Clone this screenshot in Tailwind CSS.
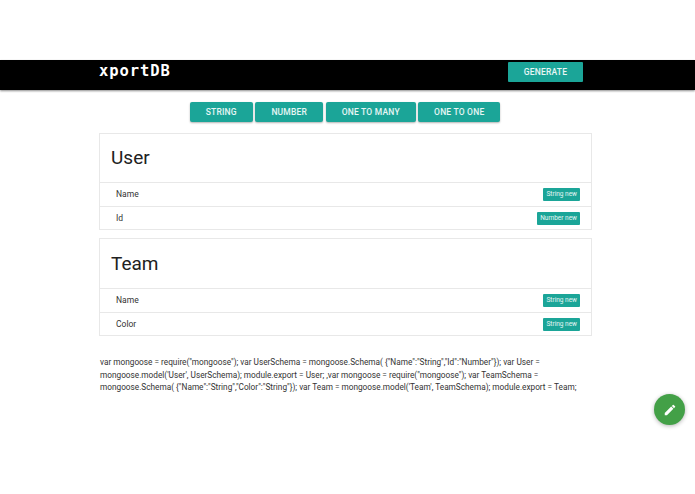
<!DOCTYPE html>
<html lang="en">
  <head>
    <meta charset="utf-8" />
    <title>xportDB</title>
    <script src="https://cdn.jsdelivr.net/npm/@tailwindcss/browser@4"></script>
  </head>
  <body class="relative bg-white h-[494px] w-[695px] overflow-hidden font-['Roboto',sans-serif] text-[#212121]">
    <div class="h-[60px]"></div>

    <!-- Nav -->
    <nav class="h-[30px] bg-black shadow-[0_1px_2px_rgba(0,0,0,0.45)] pl-[99px] pr-[112px] flex justify-between items-start">
      <span class="mt-[1px] font-['DejaVu_Sans_Mono',monospace] font-bold text-white text-[15.5px] tracking-[0.9px] leading-5">xportDB</span>
      <button class="mt-[2px] w-[75px] h-[20px] pt-[1px] bg-[#1ba598] text-white/90 text-[8.5px] font-medium tracking-[0.2px] rounded-[1px]">GENERATE</button>
    </nav>

    <!-- Type buttons -->
    <div class="flex justify-center gap-[2.5px] mt-3 pr-[5px]">
      <button class="w-[63px] h-[20px] bg-[#1ba598] text-white/90 text-[8.5px] font-medium tracking-[0.2px] rounded-[2px] shadow-[0_1px_2px_rgba(0,0,0,0.3)]">STRING</button>
      <button class="w-[68px] h-[20px] bg-[#1ba598] text-white/90 text-[8.5px] font-medium tracking-[0.2px] rounded-[2px] shadow-[0_1px_2px_rgba(0,0,0,0.3)]">NUMBER</button>
      <button class="w-[90px] h-[20px] bg-[#1ba598] text-white/90 text-[8.5px] font-medium tracking-[0.2px] rounded-[2px] shadow-[0_1px_2px_rgba(0,0,0,0.3)]">ONE TO MANY</button>
      <button class="w-[82px] h-[20px] bg-[#1ba598] text-white/90 text-[8.5px] font-medium tracking-[0.2px] rounded-[2px] shadow-[0_1px_2px_rgba(0,0,0,0.3)]">ONE TO ONE</button>
    </div>

    <main class="ml-[99px] w-[493px] mt-[11px]">
      <!-- User -->
      <section class="border border-[#e8e8e8] text-[8.5px] text-[#333]">
        <h2 class="h-[48px] pl-[11px] flex items-center text-[19px] text-[#212121]">User</h2>
        <div class="h-[24px] border-t border-[#e8e8e8] pl-[16px] pr-[11px] flex items-center justify-between">
          <span>Name</span>
          <span class="h-[13px] px-[3px] bg-[#1ba598] text-white/90 text-[6.5px] leading-[13px] rounded-[1px]">String new</span>
        </div>
        <div class="h-[23px] border-t border-[#e8e8e8] pl-[16px] pr-[11px] flex items-center justify-between">
          <span>Id</span>
          <span class="h-[13px] px-[3px] bg-[#1ba598] text-white/90 text-[6.5px] leading-[13px] rounded-[1px]">Number new</span>
        </div>
      </section>

      <!-- Team -->
      <section class="border border-[#e8e8e8] text-[8.5px] text-[#333] mt-[8px]">
        <h2 class="h-[49px] pl-[11px] pt-[2px] flex items-center text-[19px] text-[#212121]">Team</h2>
        <div class="h-[24px] border-t border-[#e8e8e8] pl-[16px] pr-[11px] flex items-center justify-between">
          <span>Name</span>
          <span class="h-[13px] px-[3px] bg-[#1ba598] text-white/90 text-[6.5px] leading-[13px] rounded-[1px]">String new</span>
        </div>
        <div class="h-[23px] border-t border-[#e8e8e8] pl-[16px] pr-[11px] flex items-center justify-between">
          <span>Color</span>
          <span class="h-[13px] px-[3px] bg-[#1ba598] text-white/90 text-[6.5px] leading-[13px] rounded-[1px]">String new</span>
        </div>
      </section>

      <p class="mt-[20px] pl-[1px] text-[8.25px] leading-[12.5px] text-[#333]">var mongoose = require("mongoose"); var UserSchema = mongoose.Schema( {"Name":"String","Id":"Number"}); var User =<br />mongoose.model('User', UserSchema); module.export = User; ,var mongoose = require("mongoose"); var TeamSchema =<br />mongoose.Schema( {"Name":"String","Color":"String"}); var Team = mongoose.model('Team', TeamSchema); module.export = Team;</p>
    </main>

    <!-- Floating edit button -->
    <button class="absolute left-[654px] top-[394px] w-[31px] h-[31px] rounded-full bg-[#43a047] shadow-[0_1px_4px_rgba(0,0,0,0.3)] flex items-center justify-center">
      <svg width="14" height="14" viewBox="0 0 24 24" fill="#fff"><path d="M3 17.25V21h3.75L17.81 9.94l-3.75-3.75L3 17.25zM20.71 7.04a1 1 0 0 0 0-1.41l-2.34-2.34a1 1 0 0 0-1.41 0l-1.83 1.83 3.75 3.75 1.83-1.83z"/></svg>
    </button>
  </body>
</html>
